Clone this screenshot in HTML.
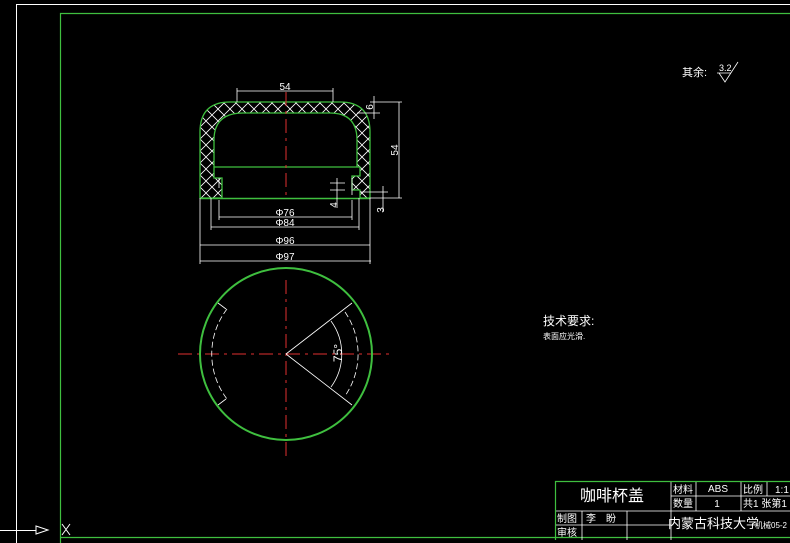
<!DOCTYPE html>
<html><head><meta charset="utf-8"><style>
html,body{margin:0;padding:0;background:#000;overflow:hidden}
svg{display:block}
text{font-family:"Liberation Sans","Noto Sans CJK SC",sans-serif;fill:#fff}
</style></head><body>
<svg width="790" height="543" viewBox="0 0 790 543" xmlns="http://www.w3.org/2000/svg">
<defs>
<pattern id="x" width="12" height="12" patternUnits="userSpaceOnUse" x="2" y="1">
<path d="M0 0L12 12M12 0L0 12" stroke="#fff" stroke-width="0.8"/>
</pattern>
</defs>
<path d="M16.5 543V4.5H790" fill="none" stroke="#fff" stroke-width="1"/>
<path d="M60.5 543V13.5H790M60 537.5H790" fill="none" stroke="#3fbf3f" stroke-width="1.2"/>
<path d="M0 530.5H36M16.5 480V543" stroke="#fff"/>
<path d="M36 526L48 530L36 534Z" fill="none" stroke="#fff"/>
<path d="M62 524L70 535M70 524L62 535" stroke="#fff"/>

<path d="M200 198V132Q200 102 230 102H340Q370 102 370 132V198H360V190H352V176H360V167H214V178H222V198Z
M214 167V140Q214 113 243 113H330Q357 113 357 140V167Z" fill="url(#x)" fill-rule="evenodd" stroke="#3fbf3f" stroke-width="1.3"/>
<path d="M200 198.5H370" stroke="#3fbf3f" stroke-width="1.5"/>
<path d="M286 92V198" stroke="#e03030" stroke-dasharray="14,5,3,5"/>
<g stroke="#fff" stroke-width="0.8" fill="none">
<path d="M237 91H333M237 88V102M333 88V102"/>
<path d="M370 102H402M357 113H380M374 96V119M399 102V198M370 198H402M383 186V212M360 192H388"/>
<path d="M337 178V208M330 183H345M330 190H345M219 178V188M352 178V195"/>
<path d="M219 217H352M219 200V220M352 200V220"/>
<path d="M211 227H359M211 198V230M359 198V230"/>
<path d="M200 245H370M200 198V264M370 198V264"/>
<path d="M200 261H371"/>
</g>
<g font-size="10">
<text x="285" y="90" text-anchor="middle">54</text>
<text x="285" y="216" text-anchor="middle">Φ76</text>
<text x="285" y="226" text-anchor="middle">Φ84</text>
<text x="285" y="244" text-anchor="middle">Φ96</text>
<text x="285" y="260" text-anchor="middle">Φ97</text>
<text transform="translate(398,150) rotate(-90)" text-anchor="middle">54</text>
<text transform="translate(373,107) rotate(-90)" text-anchor="middle">6</text>
<text transform="translate(384,210) rotate(-90)" text-anchor="middle">3</text>
<text transform="translate(337,205) rotate(-90)" text-anchor="middle">4</text>
<text transform="translate(342,353) rotate(-90)" text-anchor="middle" font-size="12">75°</text>
</g>

<path d="M178 354H390M286 280V460" stroke="#e03030" stroke-dasharray="14,5,3,5"/>
<circle cx="286" cy="354" r="86" fill="none" stroke="#3fbf3f" stroke-width="2"/>
<g stroke="#fff" stroke-width="0.8" fill="none">
<path d="M286 354L352 303M286 354L352 405"/>
<path d="M331 321A56 56 0 0 1 331 387"/>
<path d="M345 312A74 74 0 0 1 345 396" stroke-dasharray="6,3"/>
<path d="M218 303L226 309M218 405L226 399"/>
<path d="M227 309A74 74 0 0 0 227 399" stroke-dasharray="6,3"/>
</g>

<text x="682" y="76" font-size="11">其余:</text>
<text x="719" y="71" font-size="9">3.2</text>
<path d="M717 73H731M719 73L725 82L738 62" stroke="#fff" fill="none" stroke-width="0.8"/>
<text x="543" y="325" font-size="12">技术要求:</text>
<text x="543" y="339" font-size="8">表面应光滑.</text>

<g stroke="#fff" stroke-width="0.8" fill="none">
<path d="M555 511H671M555 525H671M582 511V540M627 511V540M671 482V540M671 496H790M696 482V511M741 482V511M767 482V496M671 511H790"/>
</g>
<path d="M555.5 540V481.5H790" stroke="#3fbf3f" stroke-width="1.2" fill="none"/>
<text x="612" y="501" font-size="16" text-anchor="middle">咖啡杯盖</text>
<text x="673" y="493" font-size="10">材料</text>
<text x="718" y="492" font-size="10" text-anchor="middle">ABS</text>
<text x="743" y="493" font-size="10">比例</text>
<text x="775" y="493" font-size="10">1:1</text>
<text x="673" y="507" font-size="10">数量</text>
<text x="717" y="507" font-size="10" text-anchor="middle">1</text>
<text x="743" y="507" font-size="10">共1 张第1</text>
<text x="557" y="522" font-size="10">制图</text>
<text x="586" y="522" font-size="10">李　盼</text>
<text x="557" y="536" font-size="10">审核</text>
<text x="668" y="528" font-size="13">内蒙古科技大学</text>
<text x="755" y="528" font-size="8">机械05-2</text>
</svg>
</body></html>
